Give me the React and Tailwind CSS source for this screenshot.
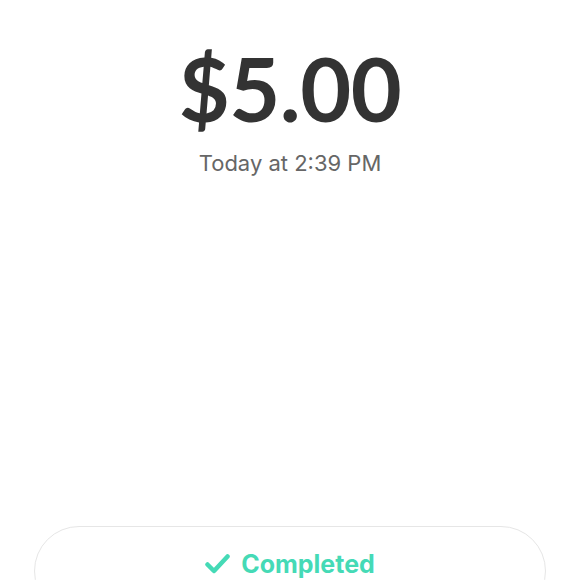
export default function App() {
  return (
    <div className="w-[580px] h-[580px] overflow-hidden bg-white flex flex-col items-center font-['Lato',sans-serif]">
      {/* Amount */}
      <div className="mt-[38px] text-[88px] leading-[100px] font-bold text-[#333333] tracking-[-0.5px]">
        $5.00
      </div>
      <div className="mt-[11px] font-['Inter',sans-serif] text-[22px] leading-[28px] text-[#666666]">
        Today at 2:39 PM
      </div>

      <div className="flex-1" />

      {/* Status pill */}
      <div className="w-[512px] h-[90px] -mb-[36px] rounded-[45px] border border-[#e6e6e6] flex items-start justify-center pt-[22px]">
        <div className="flex items-center gap-[11px] text-[#45dab6] font-['Inter',sans-serif] text-[25px] font-bold leading-[30px]">
          <svg width="25" height="22" viewBox="0 0 25 22" fill="none">
            <path d="M2.5 11.5 L9 18 L22.5 3.5" stroke="currentColor" strokeWidth="4.5" strokeLinecap="round" strokeLinejoin="round" />
          </svg>
          <span>Completed</span>
        </div>
      </div>
    </div>
  );
}
